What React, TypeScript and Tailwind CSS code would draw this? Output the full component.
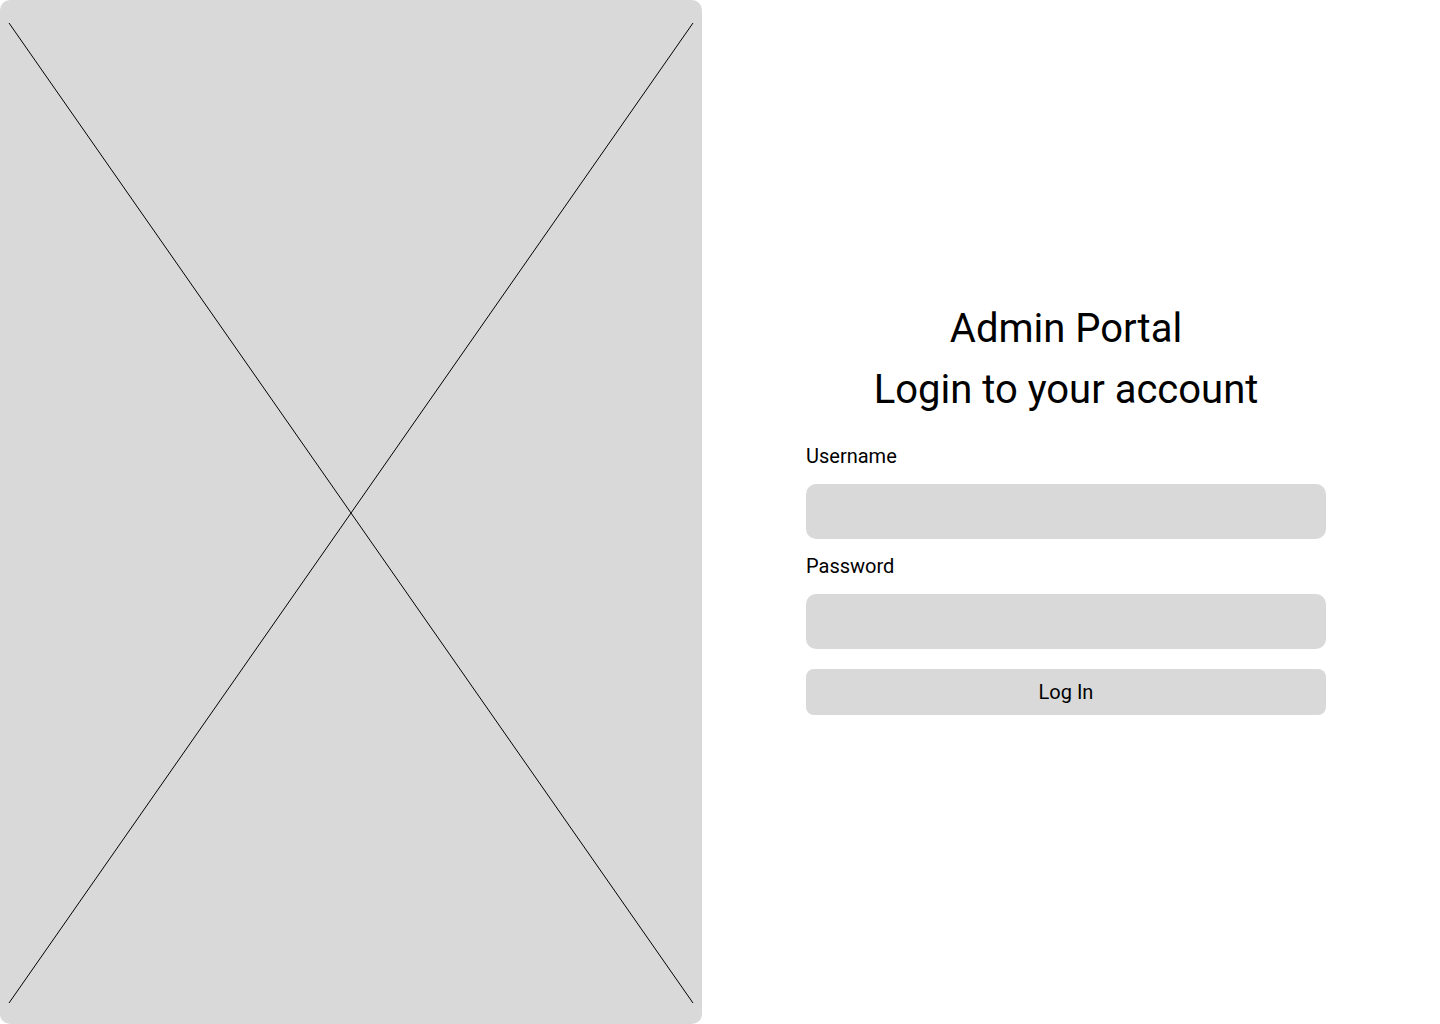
import React from "react";

export default function App() {
  return (
    <div className="flex h-[1024px] w-[1440px] bg-white" style={{ fontFamily: "Roboto, 'Noto Sans', sans-serif" }}>
      <div className="relative h-full w-[702px] shrink-0 overflow-hidden rounded-[10px] bg-[#d9d9d9]">
        <svg className="absolute inset-0 h-full w-full" viewBox="0 0 702 1024" preserveAspectRatio="none">
          <line x1="9" y1="23" x2="693" y2="1003" stroke="#000" strokeWidth="1" />
          <line x1="693" y1="23" x2="9" y2="1003" stroke="#000" strokeWidth="1" />
        </svg>
      </div>
      <div className="flex flex-1 items-center pb-[12px] pl-[104px]">
        <div className="flex w-[520px] flex-col">
          <div className="flex flex-col items-center text-[40px] leading-[61px] text-black">
            <h1>Admin Portal</h1>
            <h2>Login to your account</h2>
          </div>
          <label className="mt-[24px] text-[20px] leading-[24px] text-black">Username</label>
          <div className="mt-[16px] h-[55px] rounded-[10px] bg-[#d9d9d9]" />
          <label className="mt-[15px] text-[20px] leading-[24px] text-black">Password</label>
          <div className="mt-[16px] h-[55px] rounded-[10px] bg-[#d9d9d9]" />
          <button className="mt-[20px] flex h-[46px] items-center justify-center rounded-[8px] bg-[#d9d9d9] text-[20px] text-black">
            Log In
          </button>
        </div>
      </div>
    </div>
  );
}
